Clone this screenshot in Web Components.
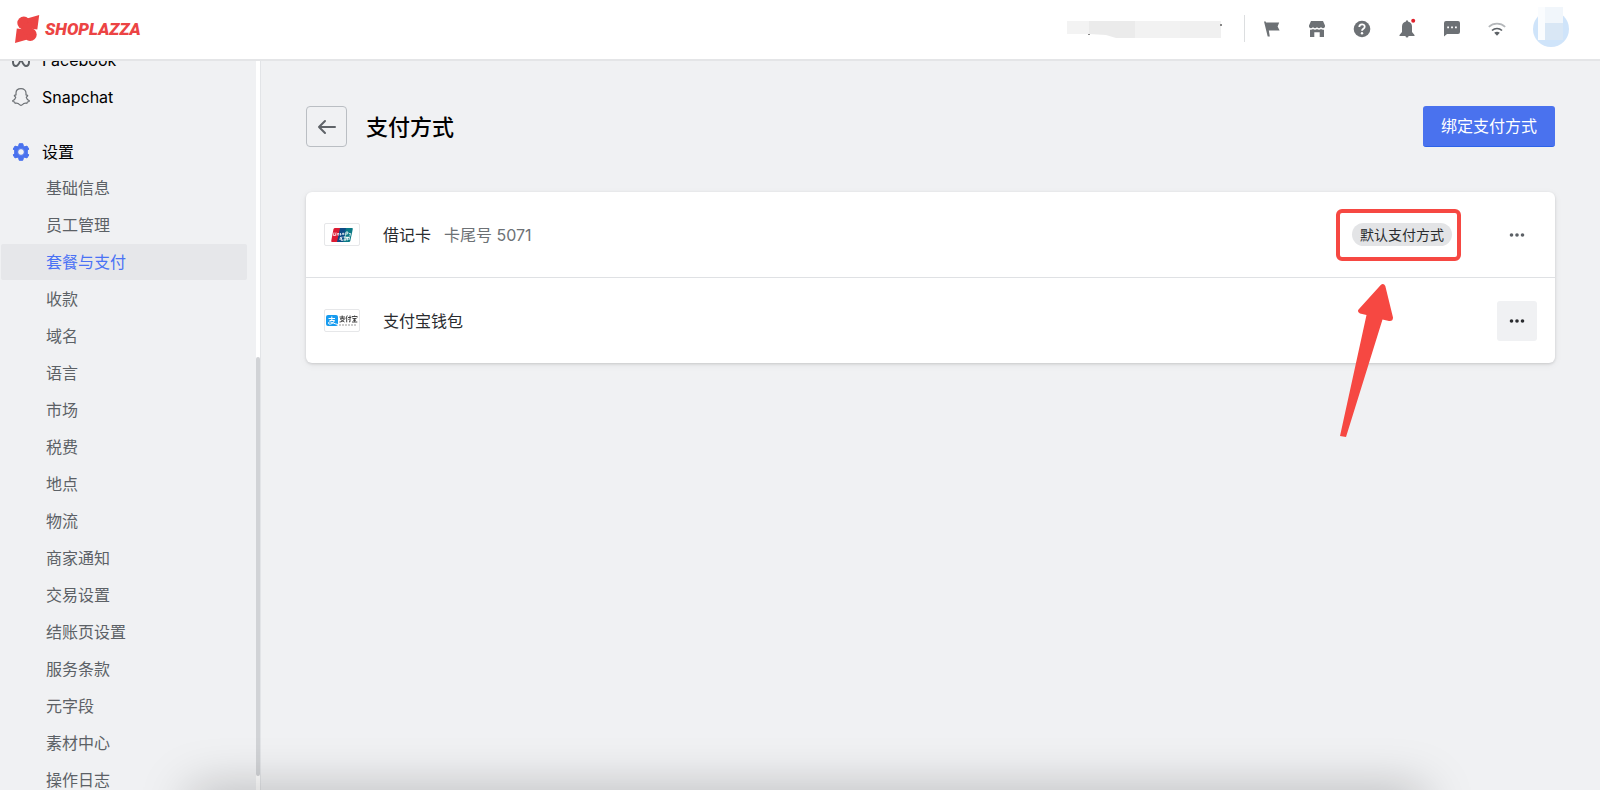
<!DOCTYPE html>
<html lang="zh-CN">
<head>
<meta charset="utf-8">
<title>支付方式</title>
<style>
  body {
    margin: 0;
    height: 100vh;
    overflow: hidden;
    background: #f0f1f3;
    color: #000;
    font: 16px/24px Inter, "Noto Sans CJK SC", sans-serif;
  }
</style>
</head>
<body>
<admin-layout>
  <admin-header slot="header"></admin-header>
  <side-nav slot="nav">
    <nav-group label="Facebook" icon="meta"></nav-group>
    <nav-group label="Snapchat" icon="snapchat"></nav-group>
    <nav-group label="设置" icon="gear" spaced>
      <nav-item>基础信息</nav-item>
      <nav-item>员工管理</nav-item>
      <nav-item active>套餐与支付</nav-item>
      <nav-item>收款</nav-item>
      <nav-item>域名</nav-item>
      <nav-item>语言</nav-item>
      <nav-item>市场</nav-item>
      <nav-item>税费</nav-item>
      <nav-item>地点</nav-item>
      <nav-item>物流</nav-item>
      <nav-item>商家通知</nav-item>
      <nav-item>交易设置</nav-item>
      <nav-item>结账页设置</nav-item>
      <nav-item>服务条款</nav-item>
      <nav-item>元字段</nav-item>
      <nav-item>素材中心</nav-item>
      <nav-item>操作日志</nav-item>
    </nav-group>
  </side-nav>
  <page-title action="绑定支付方式">支付方式</page-title>
  <payment-list>
    <payment-row brand="unionpay" detail="卡尾号 5071">
      借记卡
      <default-badge slot="badge">默认支付方式</default-badge>
    </payment-row>
    <payment-row brand="alipay" hovered>支付宝钱包</payment-row>
  </payment-list>
</admin-layout>

<script>
const icons = {
  meta: `<svg width="18" height="18" viewBox="0 0 18 18" fill="none" stroke="#5c6166" stroke-width="2"><path d="M1 11C1 7 3 4 5 4c4 0 5 11 9 11 2 0 3-1.500 3-4 0-4-2-7-4-7-4 0-5 11-9 11-2 0-3-1.500-3-4z"/></svg>`,
  snapchat: `<svg width="18" height="18" viewBox="0 0 18 18" fill="none" stroke="#6d7175" stroke-width="1.200" stroke-linejoin="round"><path d="M9 .6C6 .6 4 2.500 4 5v2c-.6.2-1.600 0-1.700.6-.1.700 1.500.9 1.400 1.700-.4 1.700-1.700 2.900-3.100 3.400 0 1 1.400 1.200 2.100 1.400l.4 1.200c.9-.1 2-.3 3 .2.9.6 1.700 1.800 2.900 1.800s2-1.200 2.900-1.800c1-.5 2.100-.3 3-.2l.4-1.200c.7-.2 2.100-.4 2.100-1.400-1.400-.5-2.700-1.700-3.100-3.400-.1-.8 1.500-1 1.400-1.700-.1-.6-1.100-.4-1.700-.6V5C14 2.500 12 .6 9 .6z"/></svg>`,
  gear: `<svg width="18" height="18" viewBox="0 0 18 18" fill="#4a72ee"><path stroke="#4a72ee" stroke-linejoin="round" fill-rule="evenodd" d="M7.200.7h3.600l.5 2.200 1.500.9 2.200-.7 1.800 3-1.500 1.600v2.600l1.500 1.600-1.800 3-2.200-.7-1.500.9-.5 2.200H7.200l-.5-2.200-1.500-.9-2.200.7-1.800-3 1.500-1.600V7.700L1.200 6.100l1.800-3 2.200.7 1.500-.9zM9 5.600a3.400 3.400 0 1 0 0 6.800 3.400 3.400 0 0 0 0-6.800z"/></svg>`,
  flag: `<svg width="18" height="18" viewBox="0 0 18 18"><path d="M1 1.500h1.700l.3 1h13.200l-1.600 4 2 4H5.800l1 6H4.700z"/></svg>`,
  store: `<svg width="18" height="18" viewBox="0 0 18 18"><path d="M3 1h12l2 4.500c.2 1.800-.7 2.700-2 2.700-1 0-1.700-.6-2-1.200-.3.700-1 1.200-2 1.200S9.300 7.700 9 7c-.3.700-1 1.200-2 1.200S5.300 7.700 5 7c-.3.600-1 1.200-2 1.200-1.300 0-2.200-.9-2-2.700zM2 9.700c1.200.2 2.200 0 3-.6 1.200.9 2.800.9 4 0 1.200.9 2.800.9 4 0 .8.600 1.800.8 3 .6V17h-4.300v-4.700H6.300V17H2z"/></svg>`,
  help: `<svg width="18" height="18" viewBox="0 0 18 18"><circle cx="9" cy="9" r="8.300"/><path d="M6.300 7c0-3.500 5.400-3.500 5.400-.3C11.700 8.800 9 8.700 9 10.800" fill="none" stroke="#fff" stroke-width="1.800"/><circle cx="9" cy="13.300" r="1.200" fill="#fff"/></svg>`,
  bell: `<svg width="18" height="18" viewBox="0 0 18 18" overflow="visible"><path d="M8 1.500V.5h2v1c2.600.6 4 2.600 4 5V12l2.500 3v1h-6a1.500 1.500 0 0 1-3 0h-6v-1L4 12V6.500c0-2.400 1.400-4.400 4-5z"/><circle cx="15.200" cy=".7" r="2" fill="#e0202b"/></svg>`,
  chat: `<svg width="18" height="18" viewBox="0 0 18 18"><path d="M3 1h12a2 2 0 0 1 2 2v9a2 2 0 0 1-2 2H4l-3 2.500V3a2 2 0 0 1 2-2z"/><path d="M4.200 6.400h1.800v1.800H4.200zm3.900 0h1.800v1.800H8.100zm3.900 0h1.800v1.800H12z" fill="#fff"/></svg>`,
  wifi: `<svg width="18" height="18" viewBox="0 0 18 18" fill="none" stroke-width="1.700"><path d="M.8 6.900c4.700-4.300 11.700-4.300 16.400 0" stroke="#b4b7ba"/><path d="M4 10.500c2.900-2.700 7.100-2.700 10 0" stroke="#5c6166"/><path d="M6.200 12.800c1.700-1.300 3.900-1.300 5.600 0L9 15.800z" fill="#5c6166"/></svg>`,
  back: `<svg width="20" height="16" viewBox="0 0 20 16" fill="none" stroke="#5f6368" stroke-width="2" stroke-linecap="round" stroke-linejoin="round"><path d="M18 8H2m6-6L2 8l6 6"/></svg>`,
  more: `<svg width="16" height="4" viewBox="0 0 16 4" fill="currentColor"><circle cx="2.500" cy="2" r="1.800"/><circle cx="8" cy="2" r="1.800"/><circle cx="13.500" cy="2" r="1.800"/></svg>`
};

const brands = {
  unionpay: `
    <svg width="22" height="14" viewBox="0 0 22 14" role="img" aria-label="UnionPay">
      <path d="M4 0h6L7 14H1Q0 14 .3 12.500L2.500 1Q3 0 4 0z" fill="#dc1a32"/>
      <path d="M9 0h7l-3 14H6z" fill="#0e4a86"/>
      <path d="M15 0h6q1 0 .8 1l-2.500 12q-.3 1-1.300 1h-6z" fill="#0b7a86"/>
      <path d="M3 4.500l-.5 3h2l.5-3M6 7.500l.5-2h1.500l-.4 2M9.500 5v2.500M11 7l.5-1.700h1.500L12.600 7M14.500 7.700L15 4h2l-.4 2h-2M18 5.500h1.500l-.7 3" fill="none" stroke="#fff" stroke-width=".8"/>
      <path d="M9.500 9l-.6 3M11 8.700l-1 3.500h2M12.500 9h3l-.6 3h-2.500M14 8.500v4M17 8.500l-.8 4M15.500 9.500h3l-.6 2.500" fill="none" stroke="#fff" stroke-width=".9"/>
    </svg>`,
  alipay: `
    <svg width="32" height="12" viewBox="0 0 32 12" role="img" aria-label="Alipay">
      <rect y="0" width="12" height="11" rx="2" fill="#169bef"/>
      <path d="M2.500 3.500h6.500M5.800 1.500v4M3.500 5.500h5C7.500 8.500 4.500 9.500 3 9c-1.500-.8-.3-2.500 1.500-2s4 1.800 7.500 2.500" fill="none" stroke="#fff"/>
      <g fill="none" stroke="#333" stroke-width=".9">
        <path d="M13.500 2h5.500M16.200.5v3M14 3.700h4.500C17.500 6 15.500 7 13.500 7M14.500 4.500l4 2.500"/>
        <path d="M21.300.5l-1.500 3M20.700 2.500V7.300M22 2.500h3M24 .5v6.300h-1M22.500 4l.7 1"/>
        <path d="M26 2.500V1.500h5.200v1M28.600.5v1M26.500 3.500h4M27 5.200h3M28.600 3.500v3.300M26 7h5.300"/>
      </g>
      <path d="M13.500 10h18" stroke="#777" stroke-width="1.500" stroke-dasharray="1 2"/>
    </svg>`
};

class BaseElement extends HTMLElement {
  render(html) {
    const template = document.createElement('template');
    template.innerHTML = html;
    this.attachShadow({ mode: 'open' }).appendChild(template.content.cloneNode(true));
  }
}

class AdminLayout extends BaseElement {
  constructor() {
    super();
    this.render(`
<style>
  :host {
    display: flex;
    flex-direction: column;
    height: 100%;
    position: relative;
    overflow: hidden;
  }

  .body {
    display: flex;
    flex: 1;
    min-height: 0;
  }

  main {
    flex: 1;
    min-width: 0;
    padding: 45px 45px 0;
  }

  /* shadow cast by the dock panel under the window */
  .dock {
    position: absolute;
    top: 100%;
    left: 190px;
    right: 176px;
    height: 40px;
    box-shadow: 0 0 50px rgba(0, 0, 0, .26);
    pointer-events: none;
  }
</style>
<slot name="header"></slot>
<div class="body">
  <slot name="nav"></slot>
  <main><slot></slot></main>
</div>
<div class="dock"></div>
`);
  }
}

class AdminHeader extends BaseElement {
  constructor() {
    super();
    this.render(`
<style>
  :host {
    display: block;
    flex: none;
  }

  header {
    display: flex;
    align-items: center;
    justify-content: space-between;
    height: 57px;
    padding: 0 31px 2px 15px;
    border-bottom: 2px solid #e4e5e7;
    background: #fff;
  }

  .logo {
    display: flex;
    align-items: center;
    gap: 5px;
    color: #ec4444;
    font: italic 900 17px/28px Roboto, sans-serif;
    text-decoration: none;
  }

  .tools {
    display: flex;
    align-items: center;
  }

  .store-name {
    display: block;
    margin-right: 22px;
  }

  nav {
    display: flex;
    gap: 27px;
    padding: 0 27px 0 18px;
    border-left: 1px solid #dcdee0;
    height: 27px;
    align-items: center;
  }

  button {
    display: block;
    width: 18px;
    height: 18px;
    padding: 0;
    border: 0;
    background: none;
    fill: #6d7175;
  }

  svg {
    display: block;
  }
</style>
<header>
  <a class="logo" href="#">
    <svg width="25" height="30" viewBox="0 0 25 30" fill="currentColor" aria-hidden="true">
      <circle cx="8.800" cy="9" r="6.500"/>
      <circle cx="15.200" cy="20.500" r="6.500"/>
      <path d="M12 4.500L24.200 1 22.300 15.500 18 15 14 12zM1.800 14.500L0 29l12.300-3.500L11 15.500 6 15z"/>
      <path d="M9 10l7-2 2 8-3 5-6-1-2-5z"/>
    </svg>
    <span>SHOPLAZZA</span>
  </a>
  <div class="tools">
    <svg class="store-name" width="156" height="20" viewBox="0 0 156 20" aria-hidden="true">
      <path d="M1 2h23v13H1z" fill="#f3f3f3"/>
      <path d="M23 2h46v17H50L40 16l-17-1z" fill="#ebebeb"/>
      <path d="M69 2h46v17H69z" fill="#f2f2f2"/>
      <path d="M114 2h41v17h-41z" fill="#f0f0f0"/>
      <path d="M22 15h2v1h-2zM154 5h2v2h-2z" fill="#888"/>
    </svg>
    <nav>
      <button aria-label="Flag">${icons.flag}</button>
      <button aria-label="Store">${icons.store}</button>
      <button aria-label="Help">${icons.help}</button>
      <button aria-label="Notifications">${icons.bell}</button>
      <button aria-label="Messages">${icons.chat}</button>
      <button aria-label="Network">${icons.wifi}</button>
    </nav>
    <svg width="36" height="44" viewBox="0 0 36 44" aria-hidden="true">
      <circle cx="18" cy="22" r="18" fill="#cfe4fa"/>
      <path d="M5 0h7v33H5z" fill="#fafcfe"/>
      <path d="M12 0h18v16H12z" fill="#f1f6fb"/>
      <path d="M12 16h18v17H12z" fill="#d9e7f5"/>
    </svg>
  </div>
</header>
`);
  }
}

class SideNav extends BaseElement {
  constructor() {
    super();
    this.render(`
<style>
  :host {
    display: flex;
    flex: none;
    box-sizing: border-box;
    width: 261px;
    border-right: 1px solid #e2e4e7;
    overflow: hidden;
  }

  nav {
    flex: 1;
    margin-top: -20px;
  }

  .track {
    display: flex;
    flex-direction: column;
    width: 4px;
    padding: 296px 0 14px;
    background: #fff;
  }

  .thumb {
    flex: 1;
    border-radius: 2px;
    background: #d1d3d6;
  }
</style>
<nav><slot></slot></nav>
<div class="track"><div class="thumb"></div></div>
`);
  }
}

class NavGroup extends BaseElement {
  constructor() {
    super();
    this.render(`
<style>
  :host {
    display: block;
  }

  :host([spaced]) {
    margin-top: 18px;
  }

  a {
    display: flex;
    align-items: center;
    gap: 12px;
    height: 37px;
    padding-left: 12px;
    color: #000;
    text-decoration: none;
  }
</style>
<a href="#">${icons[this.getAttribute('icon')]}<span>${this.getAttribute('label')}</span></a>
<slot></slot>
`);
  }
}

class NavItem extends BaseElement {
  constructor() {
    super();
    this.render(`
<style>
  :host {
    display: block;
    padding: 0 9px 1px 1px;
  }

  a {
    display: block;
    padding-left: 45px;
    border-radius: 2px;
    color: #5c6166;
    line-height: 36px;
    text-decoration: none;
  }

  :host([active]) a {
    background: #e6e7ea;
    color: #4a72f5;
  }
</style>
<a href="#"><slot></slot></a>
`);
  }
}

class PageTitle extends BaseElement {
  constructor() {
    super();
    this.render(`
<style>
  :host {
    display: flex;
    align-items: center;
    gap: 19px;
    margin-bottom: 45px;
  }

  h1 {
    flex: 1;
    margin: 0;
    font-size: 22px;
    font-weight: 500;
    line-height: 32px;
  }

  button {
    box-sizing: border-box;
    height: 41px;
    font: inherit;
  }

  .back {
    display: grid;
    place-items: center;
    width: 41px;
    padding: 0;
    border: 1px solid #babec3;
    border-radius: 4px;
    background: none;
  }

  .primary {
    padding: 0 18px;
    border: 0;
    border-bottom: 1px solid #2c62e8;
    border-radius: 3px;
    background: #4a72ee;
    color: #fff;
  }
</style>
<button class="back" aria-label="返回">${icons.back}</button>
<h1><slot></slot></h1>
<button class="primary">${this.getAttribute('action')}</button>
`);
  }
}

class PaymentList extends BaseElement {
  constructor() {
    super();
    this.render(`
<style>
  :host {
    display: block;
    border-radius: 6px;
    background: #fff;
    box-shadow: 0 1px 3px rgba(0, 0, 0, .14), 0 2px 8px rgba(0, 0, 0, .05);
  }

  ::slotted(:not(:first-child)) {
    border-top: 1px solid #dfe1e4;
  }
</style>
<slot></slot>
`);
  }
}

class PaymentRow extends BaseElement {
  constructor() {
    super();
    const detail = this.getAttribute('detail');
    this.render(`
<style>
  :host {
    display: flex;
    align-items: center;
    height: 85px;
    padding: 0 18px;
  }

  .brand {
    display: grid;
    place-items: center;
    box-sizing: border-box;
    width: 36px;
    height: 23px;
    margin-right: 23px;
    border: 1px solid #e6e7e9;
    border-radius: 2px;
  }

  .name {
    color: #2a2c2f;
  }

  .detail {
    margin-left: 13px;
    color: #6d7175;
  }

  ::slotted([slot="badge"]) {
    margin-right: 45px;
  }

  .space {
    flex: 1;
  }

  button {
    display: grid;
    place-items: center;
    width: 40px;
    height: 40px;
    padding: 0;
    border: 0;
    border-radius: 3px;
    background: none;
    color: #5c6166;
  }

  :host([hovered]) button {
    background: #f0f1f3;
    color: #2a2c2f;
  }
</style>
<span class="brand">${brands[this.getAttribute('brand')]}</span>
<span class="name"><slot></slot></span>
${detail ? `<span class="detail">${detail}</span>` : ''}
<span class="space"></span>
<slot name="badge"></slot>
<button aria-label="更多">${icons.more}</button>
`);
  }
}

class DefaultBadge extends BaseElement {
  constructor() {
    super();
    this.render(`
<style>
  :host {
    display: block;
    position: relative;
    padding: 0 8px;
    border-radius: 12px;
    background: #e3e4e6;
    color: #2a2c2f;
    font-size: 14px;
    line-height: 23px;
  }

  /* callout drawn over the row */
  .frame {
    position: absolute;
    inset: -14px -9px -15px -16px;
    border: 4px solid #f64842;
    border-radius: 6px;
  }

  .arrow {
    position: absolute;
    top: 60px;
    left: -12px;
  }
</style>
<slot></slot>
<div class="frame"></div>
<svg class="arrow" width="56" height="156" viewBox="0 0 56 156" fill="#f64842" aria-hidden="true">
  <path d="M40.500 2.300Q43.500-.5 45.300 3L53 34.500Q53 38.500 49 38L42.500 36.500 6 154 0 153 26.500 32 20 30.500Q16.500 28.500 19 26z"/>
</svg>
`);
  }
}

customElements.define('admin-layout', AdminLayout);
customElements.define('admin-header', AdminHeader);
customElements.define('side-nav', SideNav);
customElements.define('nav-group', NavGroup);
customElements.define('nav-item', NavItem);
customElements.define('page-title', PageTitle);
customElements.define('payment-list', PaymentList);
customElements.define('payment-row', PaymentRow);
customElements.define('default-badge', DefaultBadge);
</script>
</body>
</html>
